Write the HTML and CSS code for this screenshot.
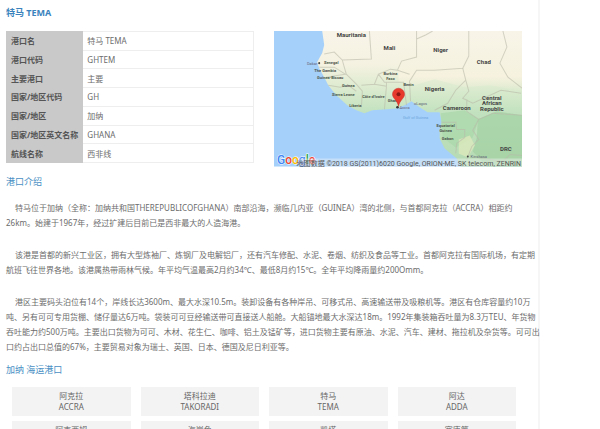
FILE: index.html
```html
<!DOCTYPE html>
<html lang="zh-CN">
<head>
<meta charset="utf-8">
<title>特马 TEMA</title>
<link rel="stylesheet" href="styles.css">
</head>
<body>
<main class="page">
  <h1 class="title">特马 TEMA</h1>
  <div class="overview">
    <table class="facts">
      <tr><th scope="row">港口名</th><td>特马 TEMA</td></tr>
      <tr><th scope="row">港口代码</th><td>GHTEM</td></tr>
      <tr><th scope="row">主要港口</th><td>主要</td></tr>
      <tr><th scope="row">国家/地区代码</th><td>GH</td></tr>
      <tr><th scope="row">国家/地区</th><td>加纳</td></tr>
      <tr><th scope="row">国家/地区英文名称</th><td>GHANA</td></tr>
      <tr><th scope="row">航线名称</th><td>西非线</td></tr>
    </table>
    <svg class="map" viewBox="0 0 247 135" role="img" aria-label="Map">
      <defs>
        <linearGradient id="land" x1="0" y1="0" x2="0" y2="1">
          <stop offset="0" stop-color="#f8f4e8"/>
          <stop offset=".24" stop-color="#f6f2e2"/>
          <stop offset=".42" stop-color="#dcebcf"/>
          <stop offset=".6" stop-color="#c2e2bf"/>
          <stop offset="1" stop-color="#b5dbb3"/>
        </linearGradient>
        <linearGradient id="north" x1="0" y1="0" x2="0" y2="1">
          <stop offset="0" stop-color="#f8f4e8"/>
          <stop offset=".75" stop-color="#f6f2df"/>
          <stop offset="1" stop-color="#f1efd8" stop-opacity="0"/>
        </linearGradient>
      </defs>
      <rect width="247" height="135" fill="#a5d0fa"/>
      <path fill="url(#land)" d="M48 0L50 14L48 22L43 31L45 37L50 46L54 54L62 64L73 74L82 79L90 82L98 79L112 78L123 77L130 74L137 70L145 76L153 81L165 81L167 91L165 98L165 107L170 117L182 127L186 135H247V0Z"/>
      <path fill="url(#north)" d="M124 0H247V60L215 54L190 56L160 48L140 54L124 50Z"/>
      <path fill="#9fd0a1" opacity=".65" d="M203 88L222 80L247 84V135H212L198 120L202 106Z"/>
      <path fill="#a9d7aa" opacity=".7" d="M166 82L190 79L204 88L198 106L181 116L168 106Z"/>
      <path fill="#dce8bd" opacity=".8" d="M184 108L195 104L200 114L193 126L184 122Z"/>
      <g class="borders">
        <path d="M50 23L60 21L68 29L97 28L95 0M45 36L60 36L71 43L52 46M68 29L72 43L82 53L88 60L87 76M54 54L66 56L74 54L82 60M87 54L100 53L112 55L110 78M100 53L104 43L116 38L123 39L135 43M112 55L112 51L129 51L132 74M136 70L135 50L142 39L160 39L188 37L194 25L194 0M142 0L142 26L127 30L123 39M142 8L151 4L158 0M104 43L110 51L126 51"/>
        <path d="M188 37L191 49L181 59L173 72L160 79M191 49L194 60L188 67L198 72L226 59L246 62M228 0L232 16L225 32L233 46L247 57M192 68L192 80L204 88L218 82L247 84M204 88L198 99L204 108L197 115L192 128M167 91L181 91L182 98L190 98L190 106L182 112L181 122M247 124L235 123L228 130L203 126"/>
      </g>
      <g class="country">
        <text x="77" y="6">Mauritania</text>
        <text x="115" y="19">Mali</text>
        <text x="166" y="21">Niger</text>
        <text x="209" y="33">Chad</text>
        <text x="160" y="60">Nigeria</text>
        <text x="182" y="79">Cameroon</text>
        <text x="217" y="69">Central</text>
        <text x="217" y="74">African</text>
        <text x="217" y="80">Republic</text>
        <text x="231" y="120">DRC</text>
      </g>
      <g class="small">
        <text x="57" y="33">Senegal</text>
        <text x="51" y="41">The Gambia</text>
        <text x="56" y="48">Guinea-Bissau</text>
        <text x="74" y="56">Guinea</text>
        <text x="69" y="65">Sierra Leone</text>
        <text x="81" y="76">Liberia</text>
        <text x="99" y="67">Côte d'Ivoire</text>
        <text x="116" y="44">Burkina</text>
        <text x="116" y="49">Faso</text>
        <text x="119" y="71">Ghana</text>
        <text x="134" y="55">Benin</text>
        <text x="171" y="96">Equatorial</text>
        <text x="171" y="101">Guinea</text>
        <text x="173" y="109">Gabon</text>
      </g>
      <g class="city">
        <text x="38" y="34">Dakar</text>
        <text x="130" y="78">Accra</text>
        <text x="146" y="74">oLagos</text>
        <text x="204" y="127">Kinshasa</text>
        <text class="sea" x="141" y="88">Gulf of Guinea</text>
      </g>
      <circle cx="45" cy="32" r="1" fill="#444"/>
      <circle cx="193" cy="125" r="1" fill="#444"/>
      <circle cx="123" cy="76" r="1.3" fill="#333"/>
      <path fill="#e8392d" stroke="#c52d25" stroke-width=".5" d="M124 75C123 69 118 67 118 63A6 6 0 0 1 130 63C130 67 125 69 124 75Z"/>
      <circle cx="124" cy="63" r="2" fill="#8d1914"/>
      <text class="google" x="3" y="132"><tspan fill="#4285f4">G</tspan><tspan fill="#ea4335">o</tspan><tspan fill="#fbbc05">o</tspan><tspan fill="#4285f4">g</tspan><tspan fill="#34a853">l</tspan><tspan fill="#ea4335">e</tspan></text>
      <rect x="26" y="127" width="221" height="8" fill="#f5f5f5" opacity=".4"/>
      <text class="credit" x="246" y="134">地图数据 ©2018 GS(2011)6020 Google, ORION-ME, SK telecom, ZENRIN</text>
    </svg>
  </div>

  <h2 class="heading">港口介绍</h2>
  <div class="intro">
    <p>特马位于加纳（全称：加纳共和国THEREPUBLICOFGHANA）南部沿海，濒临几内亚（GUINEA）湾的北侧，与首都阿克拉（ACCRA）相距约<br>26km。始建于1967年，经过扩建后目前已是西非最大的人造海港。</p>
    <p>该港是首都的新兴工业区，拥有大型炼袖厂、炼钢厂及电解铝厂，还有汽车修配、水泥、卷烟、纺织及食品等工业。首都阿克拉有国际机场，有定期<br>航班飞往世界各地。该港属热带雨林气候。年平均气温最高2月约34℃、最低8月约15℃。全年平均降雨量约200Omm。</p>
    <p>港区主要码头泊位有14个，岸线长达3600m、最大水深10.5m。装卸设备有各种岸吊、可移式吊、高速输送带及吸粮机等。港区有仓库容量约10万<br>吨、另有可可专用货棚、储仔量达6万吨。袋装可可豆经输送带可直接送人船舱。大船锚地最大水深达18m。1992年集装箱吞吐量为8.3万TEU、年货物<br>吞吐能力约500万吨。主要出口货物为可可、木材、花生仁、咖啡、铝土及锰矿等，进口货物主要有原油、水泥、汽车、建材、拖拉机及杂货等。可可出<br>口约占出口总值的67%，主要贸易对象为瑞士、英国、日本、德国及尼日利亚等。</p>
  </div>

  <h2 class="heading">加纳 海运港口</h2>
  <div class="ports">
    <a href="#accra">阿克拉<br>ACCRA</a>
    <a href="#takoradi">塔科拉迪<br>TAKORADI</a>
    <a href="#tema">特马<br>TEMA</a>
    <a href="#adda">阿达<br>ADDA</a>
    <a href="#axim">阿克西姆</a>
    <a href="#cape-coast">海岸角</a>
    <a href="#keta">凯塔</a>
    <a href="#sekondi">塞康第</a>
  </div>
</main>
</body>
</html>
```
FILE: styles.css
```css
* {
  box-sizing: border-box;
}

html {
  overflow: hidden;
}

body {
  margin: 0;
  height: 100vh;
  overflow: hidden;
  background: #fff;
  color: #6c6c6c;
  font: 8px/11px "Noto Sans", "Noto Sans CJK SC", sans-serif;
}

.page {
  width: 90%;
  min-height: 100vh;
  padding: 6px 16px 0 6px;
  border-right: 2px solid #f6f6f6;
}

.title,
.heading {
  margin: 0;
  font-size: 9px;
  line-height: 14px;
  color: #4a8fc4;
}

.title {
  font-weight: 700;
  color: #3a83bd;
}

.heading {
  font-weight: 400;
}

.overview {
  display: grid;
  grid-template-columns: 1fr 1fr;
  gap: 20px;
  align-items: start;
  margin: 11px 0 8px;
}

.facts {
  width: 100%;
  height: 132px;
  border-collapse: collapse;
}

.facts th,
.facts td {
  padding: 0 4px;
  border: 1px solid #eee;
  text-align: left;
  white-space: nowrap;
}

.facts th {
  width: 76px;
  background: #c9c9c9;
  border-color: #c9c9c9;
  color: #555;
  font-weight: 700;
}

.map {
  display: block;
  width: 100%;
  font-family: Roboto, "Noto Sans CJK SC", sans-serif;
  text-anchor: middle;
}

.borders {
  fill: none;
  stroke: #b9b9a9;
  stroke-width: 1;
  stroke-opacity: 0.6;
}

.country {
  font-size: 6px;
  font-weight: 700;
  fill: #444;
}

.small {
  font-size: 4px;
  font-weight: 700;
  fill: #4c564c;
}

.city {
  font-size: 4px;
  fill: #667;
}

.sea {
  fill: #6ea6dc;
}

.google {
  font-size: 12px;
  font-weight: 500;
  text-anchor: start;
  stroke: #fff;
  stroke-width: 1;
  paint-order: stroke;
}

.credit {
  font-size: 7px;
  text-anchor: end;
  fill: #555;
}

.intro {
  margin: 11px 0 9px;
  line-height: 15px;
  white-space: nowrap;
}

.intro p {
  margin: 0 0 17px;
  text-indent: 9px;
}

.intro p:last-child {
  margin: 0;
}

.ports {
  display: grid;
  grid-template-columns: repeat(4, 1fr);
  gap: 5px 10px;
  margin: 10px 0 0;
  padding: 0 6px;
}

.ports a {
  padding: 3px 0 4px;
  background: #f3f3f3;
  color: #666;
  text-align: center;
  text-decoration: none;
}
```
